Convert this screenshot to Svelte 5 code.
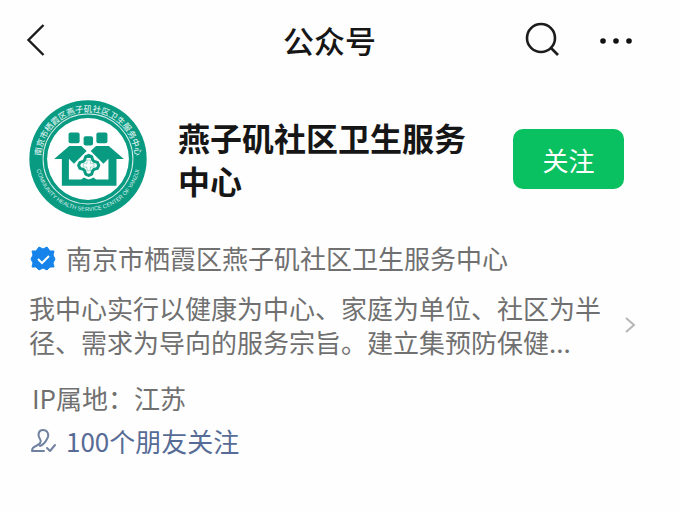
<script lang="ts">
	const account = {
		name: '燕子矶社区卫生服务中心',
		owner: '南京市栖霞区燕子矶社区卫生服务中心',
		intro: '我中心实行以健康为中心、家庭为单位、社区为半径、需求为导向的服务宗旨。建立集预防保健...',
		region: '江苏',
		friends: 100
	};

	let followed = $state(false);

	function toggleFollow() {
		followed = !followed;
	}
</script>

<div class="page">
	<header class="topbar">
		<button class="icon-btn" aria-label="返回">
			<svg width="20" height="34" viewBox="0 0 20 34" fill="none" stroke="#1c1c1c" stroke-width="2.4">
				<path d="M17.5 2 2.5 17l15 15" />
			</svg>
		</button>
		<h1>公众号</h1>
		<div class="actions">
			<button class="icon-btn" aria-label="搜索">
				<svg width="36" height="36" viewBox="0 0 36 36" fill="none" stroke="#1c1c1c" stroke-width="2.6">
					<circle cx="16" cy="16" r="14" />
					<path d="m25.500 25.500 7.500 7.500" />
				</svg>
			</button>
			<button class="icon-btn" aria-label="更多">
				<svg width="34" height="36" viewBox="0 0 34 36" fill="#111">
					<circle cx="4" cy="19" r="2.8" />
					<circle cx="17" cy="19" r="2.8" />
					<circle cx="30" cy="19" r="2.8" />
				</svg>
			</button>
		</div>
	</header>

	<main>
		<section class="profile">
			<svg class="logo" viewBox="29 31 352 352" aria-hidden="true">
				<defs>
					<path id="arc-top" d="M64 207a141 141 0 0 1 282 0" />
					<path id="arc-bottom" d="M50 180a157 157 0 1 0 310 0" />
				</defs>
				<circle cx="205" cy="207" r="175" fill="#099a82" />
				<circle cx="205" cy="207" r="134" fill="none" stroke="#d5eee9" stroke-width="3" />
				<circle cx="205" cy="207" r="122" fill="#fff" />
				<text class="ring-zh"><textPath href="#arc-top" startOffset="50%">南京市栖霞区燕子矶社区卫生服务中心</textPath></text>
				<text class="ring-en"><textPath href="#arc-bottom" startOffset="50%">COMMUNITY HEALTH SERVICE CENTER OF YANZIJI</textPath></text>
				<g fill="#099a82">
					<rect x="147" y="128" width="33" height="32" rx="6" />
					<rect x="192" y="139" width="28" height="28" rx="6" />
					<rect x="230" y="128" width="33" height="32" rx="6" />
					<path d="M104 207 149 168h36l16 15-38 38-15-15v62h118v-62l-15 15-38-38 16-15h38l45 39h-22v80H127v-80z" />
					<path d="m184 270 8-8 15 7 15-7 8 8z" />
				</g>
				<g fill="#fff" stroke-linejoin="round">
					<path d="m207 201 25 25-25 25-25-25z" stroke="#fff" stroke-width="26" />
					<path d="m207 196 9 4 3 10 4 4 10 3 4 9-4 9-10 3-4 4-3 10-9 4-9-4-3-10-4-4-10-3-4-9 4-9 10-3 4-4 3-10z" stroke="#099a82" stroke-width="9" />
					<path d="M202 210h10v11h11v10h-11v11h-10v-11h-11v-10h11z" stroke="#74c4b5" stroke-width="2" />
				</g>
			</svg>
			<h2>{account.name}</h2>
			<button class="follow" aria-pressed={followed} onclick={toggleFollow}>关注</button>
		</section>

		<p class="owner">
			<svg width="28" height="26" viewBox="0 0 28 26" aria-hidden="true">
				<path
					d="m10 2 4 2 4-2 3 4h4l-1 4 2 4-2 4 1 4h-4l-3 3-4-2-4 2-3-3H3l1-4-2-4 2-4-1-4h4z"
					fill="#1583ea"
					stroke="#1583ea"
					stroke-linejoin="round"
				/>
				<path d="m9 14 4 4 7-7" fill="none" stroke="#fff" stroke-width="2" />
			</svg>
			<span>{account.owner}</span>
		</p>

		<a class="intro" href="#intro">
			<span>{account.intro}</span>
			<svg width="12" height="18" viewBox="0 0 12 18" fill="none" stroke="#b5b5b5" stroke-width="2" aria-hidden="true">
				<path d="m2 2 8 7-8 7" />
			</svg>
		</a>

		<p class="region">IP属地：{account.region}</p>

		<a class="friends" href="#friends">
			<svg width="28" height="26" viewBox="0 0 28 26" fill="none" stroke="#7182a0" stroke-width="2" stroke-linecap="round" stroke-linejoin="round" aria-hidden="true">
				<path d="M15 23H3c0-3 1-4 4-5 4-2 6-4 4-7-3-5-1-9 3-9s7 4 4 9c-2 4-4 6-7 7" />
				<path d="m18 20 3 3 5-6" />
			</svg>
			<span>{account.friends}个朋友关注</span>
		</a>
	</main>
</div>

<style>
	:global(body) {
		margin: 0;
		background: #fefefe;
	}

	.page {
		font-family: 'Noto Sans CJK SC', 'Noto Sans', sans-serif;
		font-size: 26px;
		line-height: 34px;
		color: #707070;
	}

	h1,
	h2,
	p {
		margin: 0;
	}

	button {
		font-family: inherit;
		border: none;
		padding: 0;
		cursor: pointer;
	}

	a {
		color: inherit;
		text-decoration: none;
	}

	svg {
		display: block;
		flex: none;
	}

	.topbar {
		display: grid;
		grid-template-columns: 1fr auto 1fr;
		align-items: center;
		height: 80px;
		padding: 0 47px 0 26px;
	}

	.icon-btn {
		background: none;
		justify-self: start;
	}

	h1 {
		font-size: 31px;
		line-height: 40px;
		font-weight: 500;
		color: #161616;
	}

	.actions {
		display: flex;
		justify-content: flex-end;
		gap: 38px;
	}

	main {
		padding: 20px 56px 0 29px;
	}

	.profile {
		display: flex;
		align-items: center;
	}

	.logo {
		width: 118px;
		height: 118px;
	}

	.ring-zh,
	.ring-en {
		fill: #d5eee9;
		text-anchor: middle;
	}

	.ring-zh {
		font-size: 25px;
		font-weight: 500;
	}

	.ring-en {
		font-family: 'Liberation Sans', sans-serif;
		font-size: 17px;
	}

	h2 {
		flex: 1;
		margin-left: 31px;
		font-size: 32px;
		line-height: 43px;
		font-weight: 700;
		color: #161616;
	}

	.follow {
		width: 111px;
		height: 60px;
		margin-left: 44px;
		border-radius: 10px;
		background: #09c160;
		color: #fff;
		font-size: 26px;
	}

	.owner,
	.friends {
		display: flex;
		align-items: center;
		gap: 9px;
	}

	.owner {
		margin-top: 23px;
	}

	.intro {
		display: flex;
		align-items: center;
		justify-content: space-between;
		gap: 16px;
		margin-top: 16px;
		margin-right: -12px;
	}

	.region {
		margin-top: 22px;
		padding-left: 3px;
	}

	.friends {
		margin-top: 9px;
		color: #566b95;
	}
</style>
